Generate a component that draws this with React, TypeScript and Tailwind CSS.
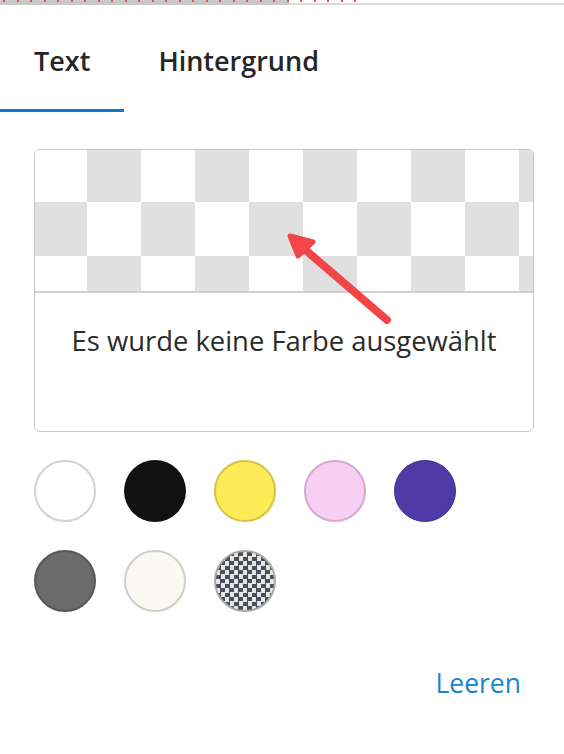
import React from "react";

const dots = Array.from({ length: 27 }, (_, i) => i);

function Swatch({ cls }: { cls: string }) {
  return <div className={`h-[62px] w-[62px] rounded-full ${cls}`} />;
}

export default function App() {
  return (
    <div
      className="relative h-[754px] w-[564px] overflow-hidden bg-white text-[#262626]"
      style={{ fontFamily: '"Open Sans", "Noto Sans", sans-serif' }}
    >
      {/* top strip */}
      <div className="relative flex h-[5px]">
        <div className="h-[5px] w-[289px] bg-[#c9c9c9]" />
        <div className="h-[5px] flex-1 border-b-2 border-[#dcdcdc] bg-white" />
        <div className="absolute left-[3px] top-0 flex gap-[11.5px]">
          {dots.map((d) => (
            <div key={d} className="h-[2px] w-[2px] bg-[#ef4b4b]" />
          ))}
        </div>
      </div>

      {/* tabs */}
      <div className="flex">
        <div className="border-b-[3px] border-[#0f78c4] pl-[34px] pr-[34px] pt-[38px] pb-[30px] text-[27px] font-semibold leading-[36px]">
          Text
        </div>
        <div className="border-b-[3px] border-transparent pl-[34px] pr-[37px] pt-[38px] pb-[30px] text-[27px] font-semibold leading-[36px]">
          Hintergrund
        </div>
      </div>

      <div className="px-[34px]">
        {/* preview box */}
        <div className="mt-[37px] h-[283px] w-[500px] overflow-hidden rounded-[6px] border border-[#c6c6c6]">
          <div className="h-[143px] border-b-2 border-[#cfcfcf] bg-[image:conic-gradient(#e0e0e0_25%,#ffffff_0_50%,#e0e0e0_0_75%,#ffffff_0)] bg-[length:108px_108px] bg-[position:-2px_-2px]" />
          <div className="pt-[30px] text-center text-[27.4px] leading-[36px] text-[#2b2b2b]">
            Es wurde keine Farbe ausgewählt
          </div>
        </div>

        {/* swatches */}
        <div className="mt-[28px] grid w-fit grid-cols-[repeat(5,62px)] gap-[28px] pl-0">
          <Swatch cls="border-2 border-[#d2d2d2] bg-white" />
          <Swatch cls="bg-[#111111]" />
          <Swatch cls="border-2 border-[#d6c445] bg-[#ffeb57]" />
          <Swatch cls="border-2 border-[#d6a9cf] bg-[#f6cff3]" />
          <Swatch cls="border border-[#3e2f94] bg-[#4f3aa6]" />
          <Swatch cls="border-2 border-[#575757] bg-[#6b6b6b]" />
          <Swatch cls="border-2 border-[#cfcfc8] bg-[#fafaf3]" />
          <Swatch cls="border-2 border-[#a9a9a9] bg-[image:conic-gradient(#4b5058_25%,#e6e6e6_0_50%,#4b5058_0_75%,#e6e6e6_0)] bg-[length:9px_9px]" />
        </div>
      </div>

      {/* Leeren */}
      <div className="mt-[54px] flex justify-end pr-[43px]">
        <button className="text-[26.5px] leading-[34px] text-[#1b85c8]">Leeren</button>
      </div>

      {/* annotation arrow */}
      <svg
        className="pointer-events-none absolute left-0 top-0"
        width="564"
        height="754"
        viewBox="0 0 564 754"
      >
        <line
          x1="387"
          y1="320"
          x2="302"
          y2="247"
          stroke="#f24646"
          strokeWidth="8"
          strokeLinecap="round"
        />
        <polygon
          points="290,236 298,256 313,242"
          fill="#f24646"
          stroke="#f24646"
          strokeWidth="5"
          strokeLinejoin="round"
        />
      </svg>
    </div>
  );
}
